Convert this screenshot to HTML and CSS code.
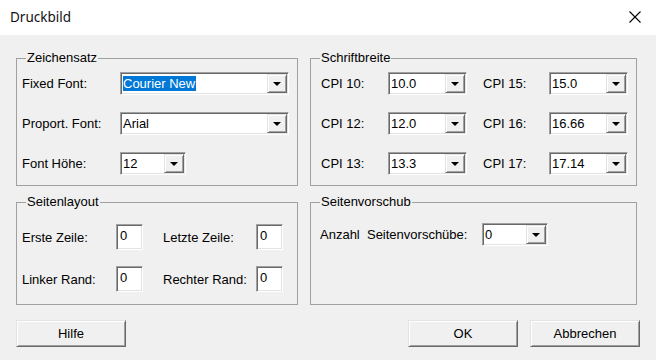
FILE: index.html
```html
<!DOCTYPE html>
<html lang="de">

<head>
    <meta charset="UTF-8">
    <meta name="viewport" content="width=device-width, initial-scale=1.0">
    <title>Druckbild</title>
    <link rel="stylesheet" href="styles.css">
</head>

<body>

    <div class="titlebar">
        <span class="title">Druckbild</span>
        <span class="close">
            <svg width="12" height="12" viewBox="0 0 12 12"><path d="M0.5 0.5L11.5 11.5M11.5 0.5L0.5 11.5" stroke="#000" stroke-width="1.1" fill="none"/></svg>
        </span>
    </div>

    <div class="dialog">
        <div class="groups">

            <fieldset class="group top">
                <legend>Zeichensatz</legend>
                <div class="form font_form">
                    <label>Fixed Font:</label>
                    <div class="combo font_combo"><span class="value"><span class="selected">Courier New</span></span><span class="drop"></span></div>
                    <label>Proport. Font:</label>
                    <div class="combo font_combo"><span class="value">Arial</span><span class="drop"></span></div>
                    <label>Font Höhe:</label>
                    <div class="combo small_combo"><span class="value">12</span><span class="drop"></span></div>
                </div>
            </fieldset>

            <fieldset class="group top">
                <legend>Schriftbreite</legend>
                <div class="form cpi_form">
                    <label>CPI 10:</label>
                    <div class="combo cpi_combo"><span class="value">10.0</span><span class="drop"></span></div>
                    <label>CPI 15:</label>
                    <div class="combo cpi_combo"><span class="value">15.0</span><span class="drop"></span></div>
                    <label>CPI 12:</label>
                    <div class="combo cpi_combo"><span class="value">12.0</span><span class="drop"></span></div>
                    <label>CPI 16:</label>
                    <div class="combo cpi_combo"><span class="value">16.66</span><span class="drop"></span></div>
                    <label>CPI 13:</label>
                    <div class="combo cpi_combo"><span class="value">13.3</span><span class="drop"></span></div>
                    <label>CPI 17:</label>
                    <div class="combo cpi_combo"><span class="value">17.14</span><span class="drop"></span></div>
                </div>
            </fieldset>

            <fieldset class="group bottom">
                <legend>Seitenlayout</legend>
                <div class="form layout_form">
                    <label>Erste Zeile:</label>
                    <div class="edit">0</div>
                    <label>Letzte Zeile:</label>
                    <div class="edit">0</div>
                    <label>Linker Rand:</label>
                    <div class="edit">0</div>
                    <label>Rechter Rand:</label>
                    <div class="edit">0</div>
                </div>
            </fieldset>

            <fieldset class="group bottom">
                <legend>Seitenvorschub</legend>
                <div class="form feed_form">
                    <label>Anzahl&nbsp; Seitenvorschübe:</label>
                    <div class="combo small_combo"><span class="value">0</span><span class="drop"></span></div>
                </div>
            </fieldset>

        </div>

        <div class="buttons">
            <button>Hilfe</button>
            <button class="ok">OK</button>
            <button>Abbrechen</button>
        </div>
    </div>

</body>

</html>
```

FILE: styles.css
```css
body {
    margin: 0;
    width: 656px;
    height: 360px;
    background-color: #f0f0f0;
    font-family: "Liberation Sans", Arial, sans-serif;
    font-size: 13px;
    color: #000;
    overflow: hidden;
}

.titlebar {
    height: 35px;
    background-color: #fff;
    display: flex;
    align-items: center;
    justify-content: space-between;
    padding: 0 15px 0 10px;
}

.title {
    font-family: "Noto Sans", "Open Sans", sans-serif;
    font-size: 13.5px;
    margin-top: -2px;
    color: #111;
}

.close {
    display: flex;
    margin-top: -2px;
}

.dialog {
    padding: 16px 16px 0 16px;
}

.groups {
    display: grid;
    grid-template-columns: 282px 327px;
    column-gap: 12px;
    row-gap: 9px;
}

fieldset.group {
    margin: 0;
    padding: 0 5px;
    border: 1px solid #a0a0a0;
    box-sizing: border-box;
    min-width: 0;
}

fieldset.top {
    height: 135px;
}

fieldset.bottom {
    height: 110px;
}

legend {
    padding: 0 1px;
    margin-left: 4px;
    line-height: 14px;
}

.form {
    display: grid;
    align-items: center;
    justify-items: start;
}

.font_form {
    grid-template-columns: 98px auto;
    row-gap: 17px;
    padding-top: 7px;
}

.cpi_form {
    grid-template-columns: 67px 79px 16px 66px 79px;
    row-gap: 17px;
    padding: 7px 0 0 5px;
}

.cpi_form .combo:nth-of-type(odd) {
    grid-column: 2;
}

.cpi_form label:nth-of-type(even) {
    grid-column: 4;
}

.cpi_form .combo:nth-of-type(even) {
    grid-column: 5;
}

.layout_form {
    grid-template-columns: 94px 27px 20px 93px 27px;
    row-gap: 16px;
    padding-top: 15px;
}

.layout_form label:nth-of-type(even) {
    grid-column: 4;
}

.feed_form {
    grid-template-columns: 162px auto;
    padding: 14px 0 0 4px;
}

label {
    white-space: nowrap;
}

/* sunken combo box */
.combo {
    display: flex;
    height: 23px;
    box-sizing: border-box;
    background-color: #fff;
    border: 1px solid;
    border-color: #a0a0a0 #fff #fff #a0a0a0;
    box-shadow: inset 1px 1px #696969, inset -1px -1px #e3e3e3;
    padding: 1px;
}

.font_combo {
    width: 169px;
}

.small_combo {
    width: 66px;
}

.cpi_combo {
    width: 79px;
}

.value {
    flex: 1;
    padding-left: 1px;
    line-height: 19px;
    white-space: nowrap;
    overflow: hidden;
}

.selected {
    background-color: #0078d7;
    color: #fff;
    padding-right: 1px;
}

.drop {
    width: 20px;
    box-sizing: border-box;
    background-color: #f0f0f0;
    border: 1px solid;
    border-color: #e3e3e3 #696969 #696969 #e3e3e3;
    box-shadow: inset 1px 1px #fff, inset -1px -1px #a0a0a0;
    display: flex;
    align-items: center;
    justify-content: center;
}

.drop::after {
    content: "";
    border-left: 4px solid transparent;
    border-right: 4px solid transparent;
    border-top: 4px solid #000;
    margin-top: 1px;
}

.edit {
    width: 27px;
    height: 26px;
    box-sizing: border-box;
    background-color: #fff;
    border: 1px solid;
    border-color: #a0a0a0 #fff #fff #a0a0a0;
    box-shadow: inset 1px 1px #696969, inset -1px -1px #e3e3e3;
    padding: 3px 0 0 3px;
    line-height: 16px;
}

.buttons {
    display: flex;
    gap: 12px;
    margin-top: 15px;
}

.buttons button {
    width: 110px;
    height: 27px;
    font-family: "Liberation Sans", Arial, sans-serif;
    font-size: 13px;
    color: #000;
    background-color: #f0f0f0;
    border: 1px solid;
    border-color: #e3e3e3 #696969 #696969 #e3e3e3;
    box-shadow: inset 1px 1px #fff, inset -1px -1px #a0a0a0;
    padding: 0;
}

.buttons .ok {
    margin-left: auto;
}
```
